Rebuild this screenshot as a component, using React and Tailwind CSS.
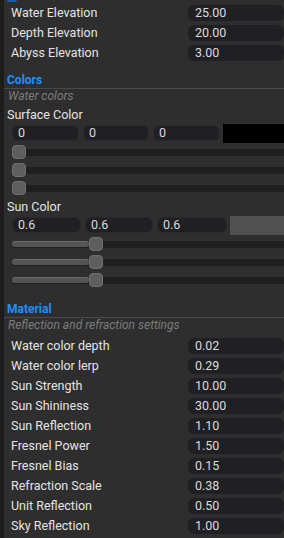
const topRows = [
  ["Water Elevation", "25.00"],
  ["Depth Elevation", "20.00"],
  ["Abyss Elevation", "3.00"],
]

const materialRows = [
  ["Water color depth", "0.02"],
  ["Water color lerp", "0.29"],
  ["Sun Strength", "10.00"],
  ["Sun Shininess", "30.00"],
  ["Sun Reflection", "1.10"],
  ["Fresnel Power", "1.50"],
  ["Fresnel Bias", "0.15"],
  ["Refraction Scale", "0.38"],
  ["Unit Reflection", "0.50"],
  ["Sky Reflection", "1.00"],
]

function FieldRow({ label, value }) {
  return (
    <div className="flex h-[16px] items-center">
      <div className="w-[184px] pl-[7px] text-[12.5px] leading-[16px] text-[#e4e4e4]">{label}</div>
      <div className="flex h-[16px] w-[96px] items-center rounded-[6px] bg-[#202024] pl-[7px] text-[12.5px] leading-[16px] text-[#dadada]">
        {value}
      </div>
    </div>
  )
}

function Section({ title, subtitle, className }) {
  return (
    <div className={className}>
      <div className="border-b border-[#4a4a4a] pl-[3px] text-[12px] font-bold leading-[16px] text-[#1e90ff]">
        {title}
      </div>
      <div className="pl-[4px] text-[12px] italic leading-[14px] text-[#7c7c7c]">{subtitle}</div>
    </div>
  )
}

function ColorInputs({ values, widths, swatch }) {
  return (
    <div className="flex h-[20px] items-center pl-[8px]">
      {values.map((v, i) => (
        <div
          key={i}
          className="mr-[4px] flex h-[16px] shrink-0 items-center rounded-[6px] border border-[#2a2a2e] bg-[#202024] pl-[5px] text-[12.5px] leading-[16px] text-[#dadada]"
          style={{ width: widths[i] }}
        >
          {v}
        </div>
      ))}
      <div className={"ml-[-1px] h-[19px] flex-1 " + swatch} />
    </div>
  )
}

function Slider({ pos }) {
  return (
    <div className="relative flex h-[18px] items-center pl-[8px]">
      <div className="h-[7px] flex-1 rounded-l-full bg-[#1f1f1f]" />
      {pos > 0 && (
        <div
          className="absolute top-[6px] left-[8px] h-[6px] rounded-full border-t border-[#6a6a6a] bg-[#555555]"
          style={{ width: pos }}
        />
      )}
      <div
        className="absolute top-[2px] h-[14px] w-[14px] rounded-[4px] border border-[#707070] bg-[#5e5e5e]"
        style={{ left: 8 + pos }}
      />
    </div>
  )
}

export default function App() {
  return (
    <div
      className="flex h-[538px] w-[284px] overflow-hidden bg-[#2e2e2e]"
      style={{ fontFamily: "Roboto, 'Liberation Sans', sans-serif" }}
    >
      <div className="w-[4px] shrink-0 bg-[#1d1d1d]" />
      <div className="flex flex-1 flex-col">
        <div className="ml-[3px] h-[2px] w-[10px] rounded-b-[2px] bg-[#1d5a9c]" />
        <div className="mt-[3px] flex flex-col gap-[4px]">
          {topRows.map(([l, v]) => (
            <FieldRow key={l} label={l} value={v} />
          ))}
        </div>

        <Section className="mt-[11px]" title="Colors" subtitle="Water colors" />

        <div className="mt-[4px] pl-[3px] text-[12.5px] leading-[16px] text-[#e4e4e4]">Surface Color</div>
        <ColorInputs values={["0", "0", "0"]} widths={[67, 66, 67]} swatch="bg-black" />
        <Slider pos={0} />
        <Slider pos={0} />
        <Slider pos={0} />

        <div className="mt-[2px] pl-[3px] text-[12.5px] leading-[16px] text-[#e4e4e4]">Sun Color</div>
        <ColorInputs values={["0.6", "0.6", "0.6"]} widths={[69, 68, 70]} swatch="bg-[#505050]" />
        <Slider pos={77} />
        <Slider pos={77} />
        <Slider pos={77} />

        <Section className="mt-[12px]" title="Material" subtitle="Reflection and refraction settings" />

        <div className="mt-[6px] flex flex-col gap-[4px]">
          {materialRows.map(([l, v]) => (
            <FieldRow key={l} label={l} value={v} />
          ))}
        </div>
      </div>
    </div>
  )
}
